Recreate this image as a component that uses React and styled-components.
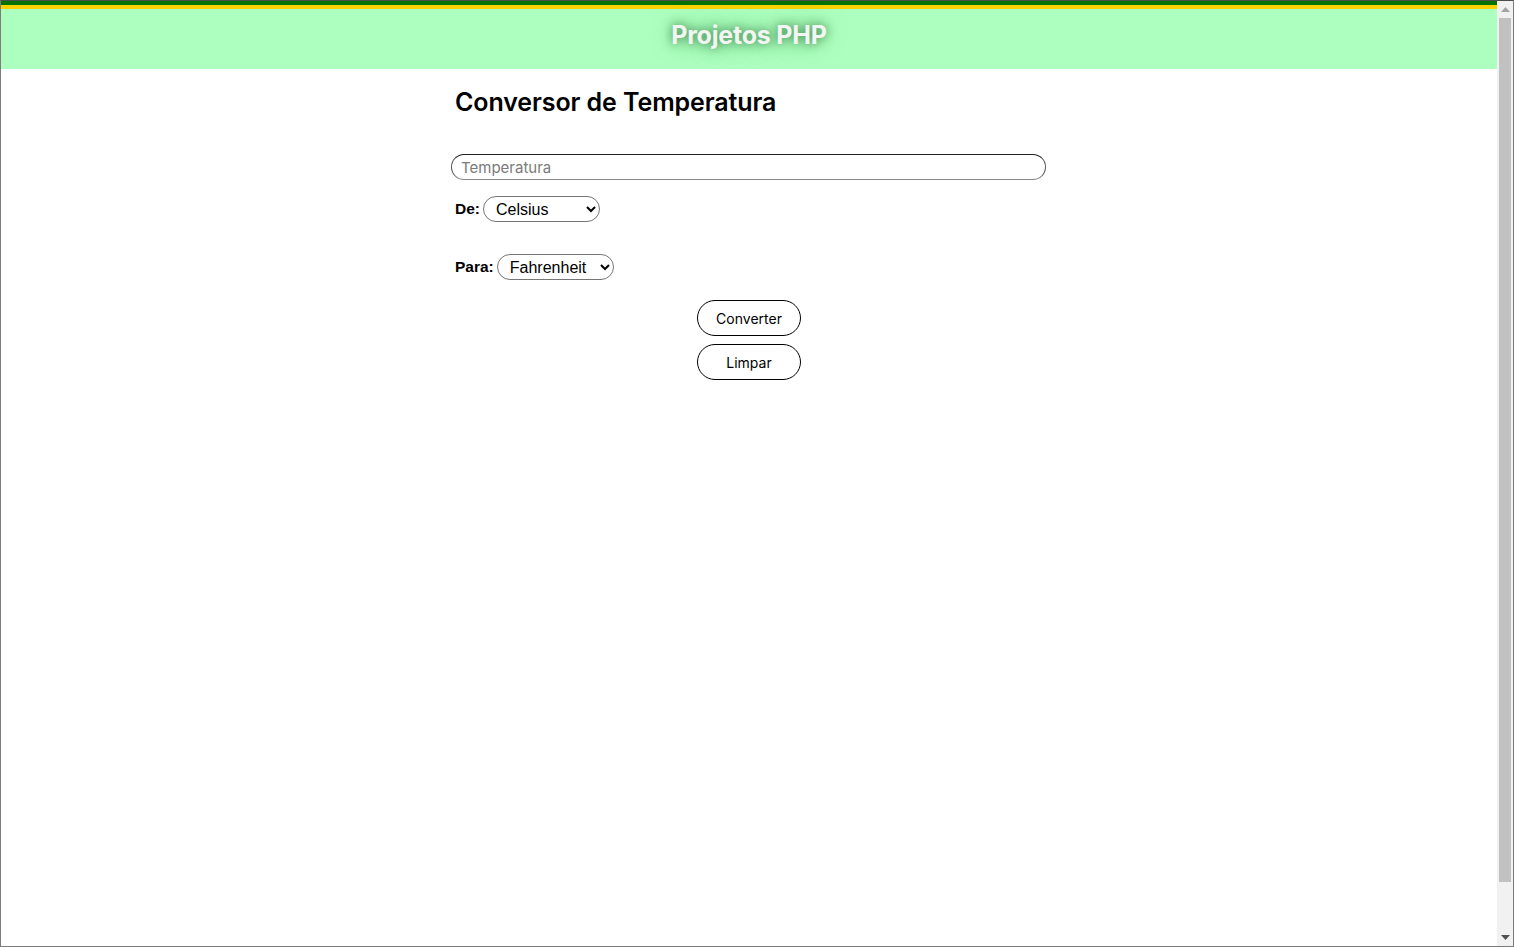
import React from 'react'
import styled, { createGlobalStyle } from 'styled-components'

const GlobalStyle = createGlobalStyle`
    html, body {
        margin: 0;
        padding: 0;
        background: #ffffff;
        overflow: hidden;
    }
`

function Scrollbar() {
    return (
        <StyledScrollbar>
            <div className="arrow">
                <svg width="9" height="5" viewBox="0 0 9 5"><path d="M0 5 L4.5 0 L9 5 Z" fill="#a3a3a3" /></svg>
            </div>
            <div className="track">
                <div className="thumb" />
            </div>
            <div className="arrow">
                <svg width="9" height="5" viewBox="0 0 9 5"><path d="M0 0 L4.5 5 L9 0 Z" fill="#505050" /></svg>
            </div>
        </StyledScrollbar>
    )
}

function App() {
    return (
        <Frame>
            <GlobalStyle />
            <Page>
                <Header>
                    <h1>Projetos PHP</h1>
                </Header>
                <Main>
                    <h2>Conversor de Temperatura</h2>
                    <form onSubmit={e => e.preventDefault()}>
                        <TextInput type="text" placeholder="Temperatura" />
                        <Field>
                            <label>De:</label>
                            <Select $width={117} defaultValue="c">
                                <option value="c">Celsius</option>
                                <option value="f">Fahrenheit</option>
                                <option value="k">Kelvin</option>
                            </Select>
                        </Field>
                        <Field>
                            <label>Para:</label>
                            <Select $width={117} defaultValue="f">
                                <option value="c">Celsius</option>
                                <option value="f">Fahrenheit</option>
                                <option value="k">Kelvin</option>
                            </Select>
                        </Field>
                        <Buttons>
                            <Button type="submit">Converter</Button>
                            <Button type="reset">Limpar</Button>
                        </Buttons>
                    </form>
                </Main>
            </Page>
            <Scrollbar />
        </Frame>
    )
}

const Frame = styled.div`
    box-sizing: border-box;
    width: 1514px;
    height: 947px;
    display: flex;
    border: 1px solid #7c7c7c;
    border-top-color: #4d4d4d;
    background: #ffffff;
`

const Page = styled.div`
    flex: 1;
    display: flex;
    flex-direction: column;
    font-family: Inter, "Noto Sans", sans-serif;
`

const Header = styled.header`
    height: 60px;
    background: #adffbf;
    border-top: 4px solid #047304;
    box-shadow: inset 0 4px 0 #f6d300;
    padding-top: 4px;
    display: flex;
    justify-content: center;
    align-items: center;
    h1 {
        margin: 0 0 8px 0;
        font-family: Inter, sans-serif;
        font-size: 25px;
        font-weight: 700;
        color: #f2f5f2;
        letter-spacing: -0.2px;
        text-shadow: 0 0 10px rgba(30, 100, 45, 0.75), 0 0 20px rgba(60, 140, 75, 0.6);
    }
`

const Main = styled.main`
    width: 596px;
    margin: 0 auto;
    padding-top: 18px;
    h2 {
        margin: 0 0 37px 4px;
        font-size: 25px;
        font-weight: 600;
        color: #000;
        letter-spacing: -0.1px;
        line-height: 30px;
    }
    form {
        display: flex;
        flex-direction: column;
    }
`

const TextInput = styled.input`
    box-sizing: border-box;
    width: 595px;
    height: 26px;
    border: 1px solid #555;
    border-top-color: #222;
    border-bottom-color: #888;
    border-radius: 13px;
    padding: 0 9px;
    font-family: Inter, sans-serif;
    font-size: 15px;
    outline: none;
    &::placeholder {
        color: #7a7a7a;
    }
`

const Field = styled.div`
    display: flex;
    align-items: center;
    gap: 3px;
    margin: 16px 0 16px 4px;
    & + & {
        margin-top: 16px;
        margin-bottom: 20px;
    }
    label {
        font-family: "Liberation Sans", Arial, sans-serif;
        font-size: 15.5px;
        font-weight: 700;
        color: #000;
    }
`

const Select = styled.select`
    box-sizing: border-box;
    width: ${p => p.$width}px;
    height: 26px;
    border: 1px solid #767676;
    border-radius: 13px;
    background: #fff;
    padding: 0 6px 0 8px;
    font-family: "Liberation Sans", Arial, sans-serif;
    font-size: 16px;
    color: #000;
`

const Buttons = styled.div`
    display: flex;
    flex-direction: column;
    align-items: center;
    gap: 8px;
`

const Button = styled.button`
    box-sizing: border-box;
    width: 104px;
    height: 36px;
    border: 1px solid #000;
    border-radius: 18px;
    background: #fff;
    font-family: Inter, sans-serif;
    font-size: 14px;
    color: #000;
    cursor: pointer;
`

const StyledScrollbar = styled.div`
    width: 16px;
    display: flex;
    flex-direction: column;
    background: #f1f1f1;
    .arrow {
        height: 17px;
        display: flex;
        align-items: center;
        justify-content: center;
    }
    .track {
        flex: 1;
        padding: 0 2px;
    }
    .thumb {
        height: 864px;
        background: #c1c1c1;
    }
`

export default App
